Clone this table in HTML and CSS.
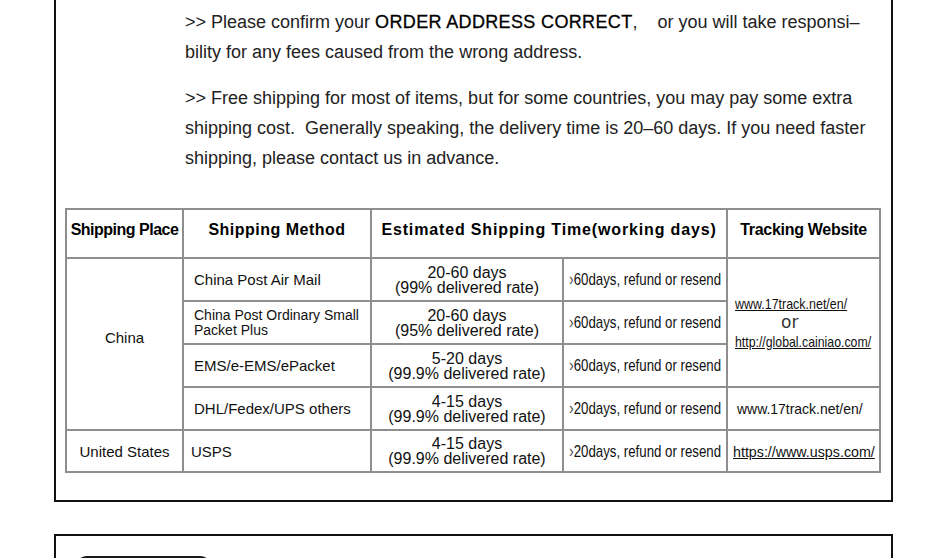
FILE: index.html
```html
<!DOCTYPE html>
<html lang="en">
<head>
<meta charset="utf-8">
<title>Shipping</title>
<link rel="stylesheet" href="styles.css">
</head>
<body>
<section class="panel">
  <div class="notes">
    <p>&gt;&gt; Please confirm your <strong class="em">ORDER ADDRESS CORRECT</strong>,&nbsp;&nbsp;&nbsp; or you will take responsi–<br>bility for any fees caused from the wrong address.</p>
    <p>&gt;&gt; Free shipping for most of items, but for some countries, you may pay some extra<br>shipping cost.&nbsp; Generally speaking, the delivery time is 20–60 days. If you need faster<br>shipping, please contact us in advance.</p>
  </div>
  <table class="ship">
    <colgroup>
      <col class="c1"><col class="c2"><col class="c3"><col class="c4"><col class="c5">
    </colgroup>
    <thead>
      <tr class="head">
        <th class="h-place">Shipping Place</th>
        <th class="h-method">Shipping Method</th>
        <th class="h-time" colspan="2">Estimated Shipping Time(working days)</th>
        <th class="h-track">Tracking Website</th>
      </tr>
    </thead>
    <tbody>
      <tr class="r1">
        <td class="place china" rowspan="4">China</td>
        <td class="method">China Post Air Mail</td>
        <td class="time">20-60 days<br>(99% delivered rate)</td>
        <td class="refund"><span class="nar"><span class="gt">›</span>60days, refund or resend</span></td>
        <td class="track" rowspan="3">
          <a class="link"><span class="nar n83">www.17track.net/en/</span></a>
          <span class="or">or</span>
          <a class="link"><span class="nar n82">http://global.cainiao.com/</span></a>
        </td>
      </tr>
      <tr class="r2">
        <td class="method small">China Post Ordinary Small<br>Packet Plus</td>
        <td class="time">20-60 days<br>(95% delivered rate)</td>
        <td class="refund"><span class="nar"><span class="gt">›</span>60days, refund or resend</span></td>
      </tr>
      <tr class="r3">
        <td class="method">EMS/e-EMS/ePacket</td>
        <td class="time">5-20 days<br>(99.9% delivered rate)</td>
        <td class="refund"><span class="nar"><span class="gt">›</span>60days, refund or resend</span></td>
      </tr>
      <tr class="r4">
        <td class="method">DHL/Fedex/UPS others</td>
        <td class="time">4-15 days<br>(99.9% delivered rate)</td>
        <td class="refund"><span class="nar"><span class="gt">›</span>20days, refund or resend</span></td>
        <td class="track plain"><span class="nar n93">www.17track.net/en/</span></td>
      </tr>
      <tr class="r5">
        <td class="place">United States</td>
        <td class="method usps">USPS</td>
        <td class="time">4-15 days<br>(99.9% delivered rate)</td>
        <td class="refund"><span class="nar"><span class="gt">›</span>20days, refund or resend</span></td>
        <td class="track usps-link"><a class="link"><span class="nar n95">https://www.usps.com/</span></a></td>
      </tr>
    </tbody>
  </table>
</section>
<section class="panel panel-next">
  <div class="pill"></div>
</section>
</body>
</html>
```
FILE: styles.css
```css
html, body {
  margin: 0;
  padding: 0;
  background: #fff;
}
body {
  font-family: "Liberation Sans", Arial, sans-serif;
  color: #222;
  overflow: hidden;
}
.panel {
  box-sizing: border-box;
  width: 839px;
  margin-left: 54px;
  border: 2px solid #111;
  border-top: none;
  padding: 0 10px 27px 9px;
}
.notes {
  padding: 7px 0 0 120px;
  font-size: 18px;
  line-height: 30px;
  color: #222;
  white-space: nowrap;
}
.notes p {
  margin: 0 0 16px 0;
}
.notes p:last-child {
  margin-bottom: 0;
}
.em {
  font-weight: normal;
  color: #000;
  letter-spacing: 0.35px;
  -webkit-text-stroke: 0.3px #000;
}
.ship {
  margin-top: 35px;
  border-collapse: collapse;
  table-layout: fixed;
  width: 814px;
  color: #111;
  font-family: "Liberation Sans", Arial, sans-serif;
  font-size: 15px;
}
.c1 { width: 117px; }
.c2 { width: 188px; }
.c3 { width: 192px; }
.c4 { width: 164px; }
.c5 { width: 153px; }
.ship th, .ship td {
  border: 2px solid #8e8e8e;
  padding: 0;
  vertical-align: middle;
}
.head { height: 49px; }
.r1, .r2, .r3, .r4 { height: 43px; }
.r5 { height: 42px; }
.ship th {
  font-size: 16px;
  font-weight: bold;
  color: #000;
  white-space: nowrap;
  text-align: center;
  padding-bottom: 7px;
}
.h-place { letter-spacing: -0.5px; }
.h-method { letter-spacing: 0.5px; }
.h-time { letter-spacing: 0.85px; }
.h-track { letter-spacing: -0.3px; }
.place {
  text-align: center;
}
.ship .china {
  padding-bottom: 14px;
}
.ship .method {
  padding-left: 10px;
  white-space: nowrap;
}
.ship .method.usps { padding-left: 7px; }
.method.small {
  font-size: 14px;
  line-height: 15px;
}
.time {
  text-align: center;
  font-size: 16px;
  line-height: 15px;
  white-space: nowrap;
}
.refund, .track {
  font-size: 15px;
  white-space: nowrap;
}
.refund {
  font-size: 17px;
}
.nar {
  display: inline-block;
  transform: scaleX(0.78);
  transform-origin: left center;
}
.n83 { transform: scaleX(0.83); }
.n82 { transform: scaleX(0.82); }
.n93 { transform: scaleX(0.93); }
.n95 { transform: scaleX(0.95); }
.link .nar {
  text-decoration: underline;
}
.ship .refund {
  padding-left: 5px;
}
.gt {
  color: #555;
  font-size: 18px;
}
.ship .track {
  padding-left: 7px;
}
.ship .track.plain {
  padding-left: 9px;
}
.ship .track.usps-link {
  padding-left: 5px;
}
.link {
  display: block;
  color: #111;
  line-height: 19px;
}
.or {
  display: block;
  font-family: "DejaVu Sans", sans-serif;
  font-size: 17px;
  line-height: 19px;
  padding-left: 46px;
  color: #333;
}
.panel-next {
  margin-top: 32px;
  border-top: 2px solid #111;
  padding: 20px 0 0 19px;
  height: 60px;
}
.pill {
  width: 137px;
  height: 24px;
  border-radius: 12px;
  background: #1a1a1a;
}
```
